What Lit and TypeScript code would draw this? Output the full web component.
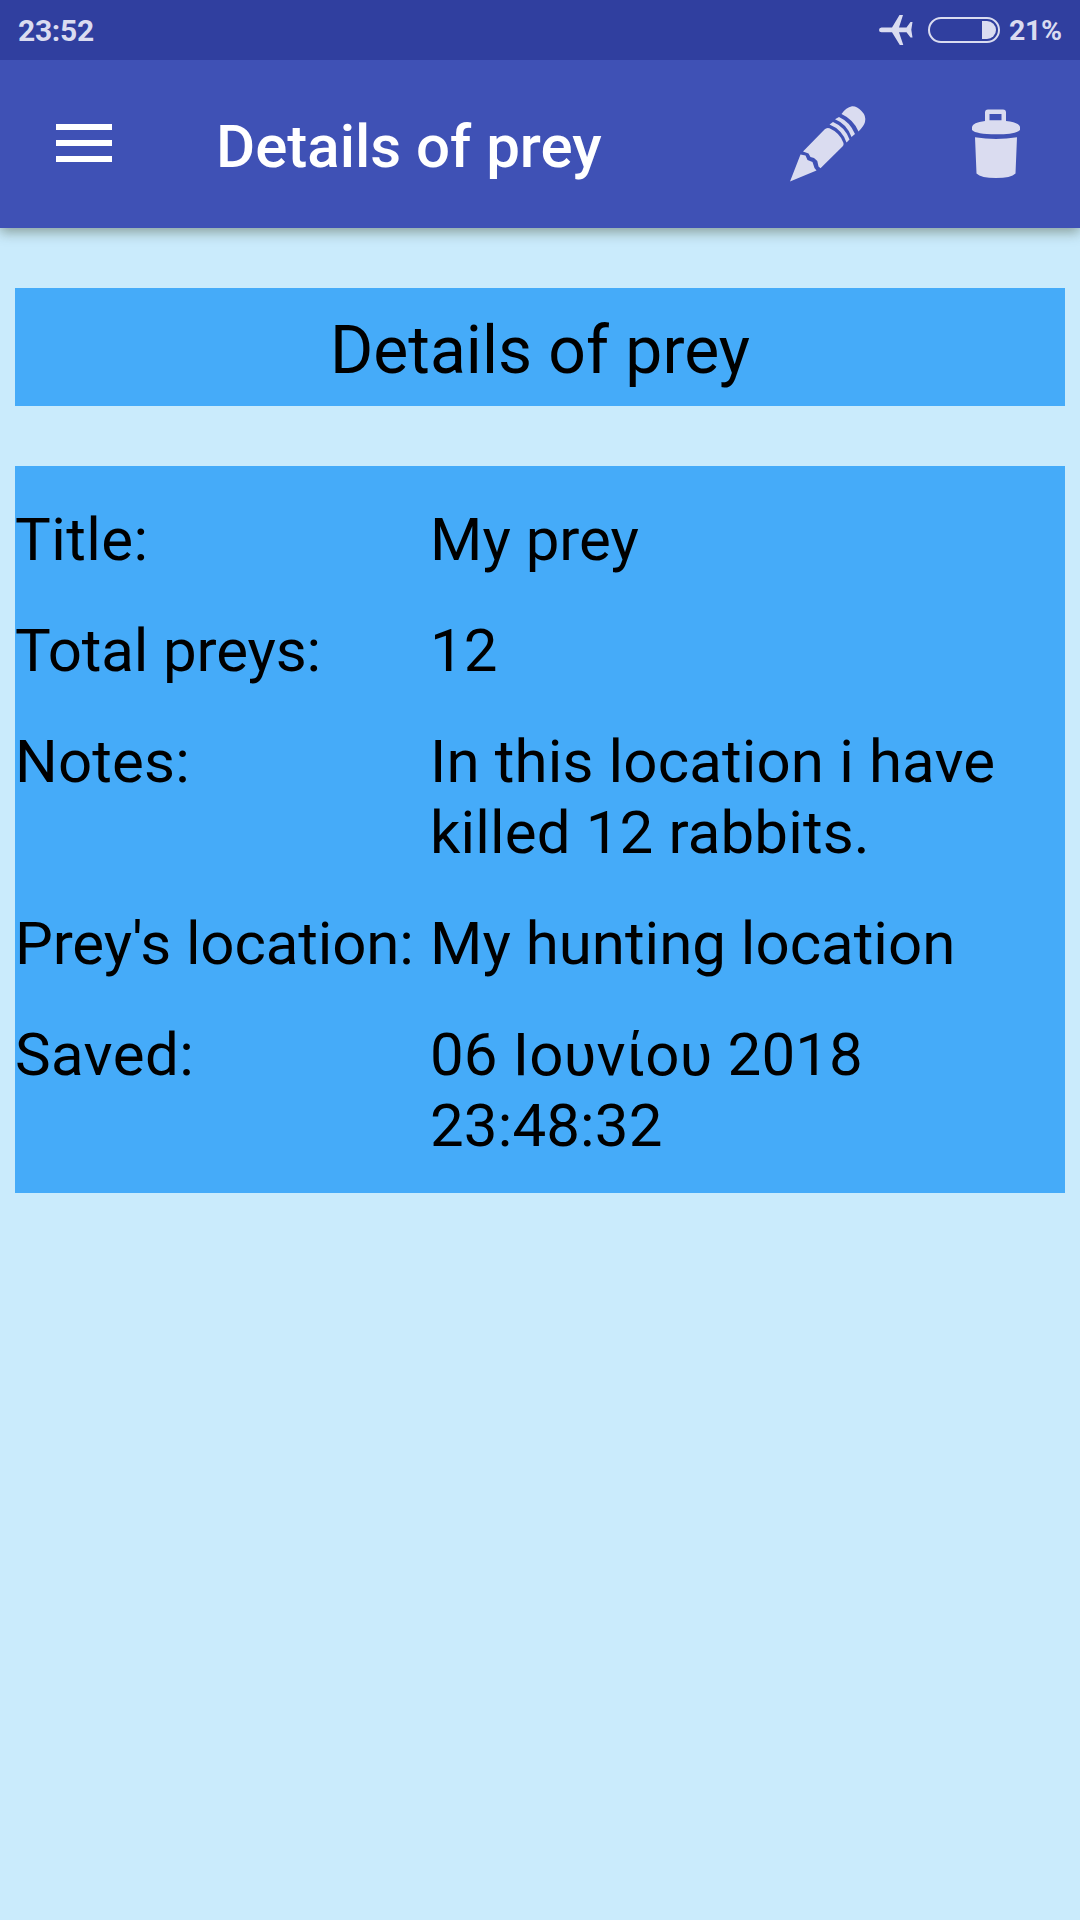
import { LitElement, html, css } from "lit";
import { customElement } from "lit/decorators.js";

const details = [
  { label: "Title:", value: "My prey", fit: "loose", valueFit: "" },
  { label: "Total preys:", value: "12", fit: "tight", valueFit: "" },
  { label: "Notes:", value: "In this location i have killed 12 rabbits.", fit: "airy", valueFit: "airy" },
  { label: "Prey's location:", value: "My hunting location", fit: "tight", valueFit: "" },
  { label: "Saved:", value: "06 Ιουνίου 2018 23:48:32", fit: "loose", valueFit: "airy" },
];

@customElement("status-bar")
class StatusBar extends LitElement {
  static styles = css`
    :host {
      display: flex;
      align-items: center;
      box-sizing: border-box;
      height: 60px;
      padding: 0 18px;
      background: #303f9f;
      color: #dadcf0;
      font: 700 30px/36px Roboto, sans-serif;
      position: relative;
      z-index: 1;
    }
    .clock { flex: 1; padding-top: 1px; letter-spacing: -0.3px; }
    .plane { width: 34px; height: 32px; margin-right: 14px; }
    .battery { width: 74px; height: 28px; margin-right: 8px; }
    .percent { font-size: 28.5px; width: 53px; padding-top: 1px; white-space: nowrap; letter-spacing: -0.3px; }
    svg { display: block; fill: currentColor; }
  `;
  render() {
    return html`
      <span class="clock">23:52</span>
      <svg class="plane" viewBox="0 0 34 32">
        <path d="M2.5 13.6H13L20.5 1H24L20 13.6H27.5L31.5 8H33.5L32.3 15.7L33.5 23.5H31.5L27.5 18.2H20L24.3 31H20.8L13 18.2H2.5Q0 18 0 15.9Q0 13.8 2.5 13.6Z" />
      </svg>
      <svg class="battery" viewBox="0 0 74 28">
        <rect x="2" y="2" width="70" height="24" rx="12" fill="none" stroke="currentColor" stroke-width="2" />
        <path d="M55 5H60A9 9 0 0 1 60 23H55Z" />
      </svg>
      <span class="percent">21%</span>
    `;
  }
}

@customElement("tool-bar")
class ToolBar extends LitElement {
  static styles = css`
    :host {
      display: flex;
      align-items: center;
      box-sizing: border-box;
      height: 168px;
      padding: 0 59px 0 56px;
      background: #3f51b5;
      color: #fff;
      box-shadow: 0 4px 12px rgba(40, 50, 20, 0.42);
    }
    .menu { width: 56px; height: 38px; margin-right: 104px; margin-bottom: 2px; }
    .title { flex: 1; margin: 0; font: 500 60px/72px Roboto, sans-serif; padding-top: 5px; }
    .action { color: #dadcf0; }
    .pencil { width: 78px; height: 78px; margin-right: 104px; }
    .trash { width: 50px; height: 70px; }
    svg { display: block; fill: currentColor; }
  `;
  render() {
    return html`
      <svg class="menu" viewBox="0 0 56 38">
        <path d="M0 0H56V6H0ZM0 16H56V22H0ZM0 32H56V38H0Z" />
      </svg>
      <h1 class="title">Details of prey</h1>
      <svg class="action pencil" viewBox="0 0 78 78">
        <path d="M1 76.5L11.5 49.5L16.5 50.5L18.5 55L23.5 57L25.5 63L27.5 65.5Z" />
        <path d="M14 46.5L35.5 24.5Q37.5 22.3 40.5 23.3Q51 28 54.5 38Q55 40 53.5 41.5L31.5 63.2L29.5 61.5L28.3 56L25 53L21.5 52L19.5 48.5Z" />
        <path d="M40.5 19.5L44 17Q56 22 60.5 34.5L57.5 37.5Q53 24.5 40.5 19.5Z" />
        <path d="M46 14.2L50 12Q61 17 66 29L62.5 32Q58 19 46 14.2Z" />
        <path d="M52.5 9Q57 2.5 63 1.3Q68 1 72.5 6Q77.5 11 76 17Q75 21 69.5 26.5Q64.5 14.5 52.5 9Z" />
      </svg>
      <svg class="action trash" viewBox="0 0 50 70">
        <path fill-rule="evenodd" d="M14 12V3.5Q14 .5 17 .5H32Q35 .5 35 3.5V12Q48.5 13.5 49 18V21Q45 25.3 25 25.3Q5 25.3 1 21V18Q1.5 13.5 14 12ZM18.5 11.3H30.5V5H18.5Z" />
        <path d="M4 28.2Q25 31.7 46 28.2L44.5 64.5Q40 69 25 69Q10 69 5.5 64.5Z" />
      </svg>
    `;
  }
}

@customElement("app-root")
class AppRoot extends LitElement {
  static styles = css`
    :host {
      display: flex;
      flex-direction: column;
      min-height: 1920px;
      background: #caebfc;
      color: #000;
      font-family: Roboto, sans-serif;
    }
    .content {
      display: flex;
      flex-direction: column;
      gap: 60px;
      padding: 60px 15px;
    }
    .heading {
      box-sizing: border-box;
      height: 118px;
      margin: 0;
      padding-top: 24px;
      background: #45abf9;
      font-size: 66px;
      font-weight: 400;
      line-height: 77px;
      text-align: center;
    }
    .details {
      display: grid;
      grid-template-columns: 400px 1fr;
      gap: 40px 15px;
      margin: 0;
      padding: 38px 0 32px;
      background: #45abf9;
      font-size: 60px;
      line-height: 71px;
    }
    .label { white-space: nowrap; }
    .value { margin: 0; }
    .loose { letter-spacing: 0.4px; }
    .airy { letter-spacing: 0.14px; }
    .tight { letter-spacing: -0.14px; }
  `;
  render() {
    return html`
      <status-bar></status-bar>
      <tool-bar></tool-bar>
      <main class="content">
        <h2 class="heading">Details of prey</h2>
        <dl class="details">
          ${details.map(
            (d) => html`<dt class="label ${d.fit}">${d.label}</dt>
              <dd class="value ${d.valueFit}">${d.value}</dd>`
          )}
        </dl>
      </main>
    `;
  }
}
